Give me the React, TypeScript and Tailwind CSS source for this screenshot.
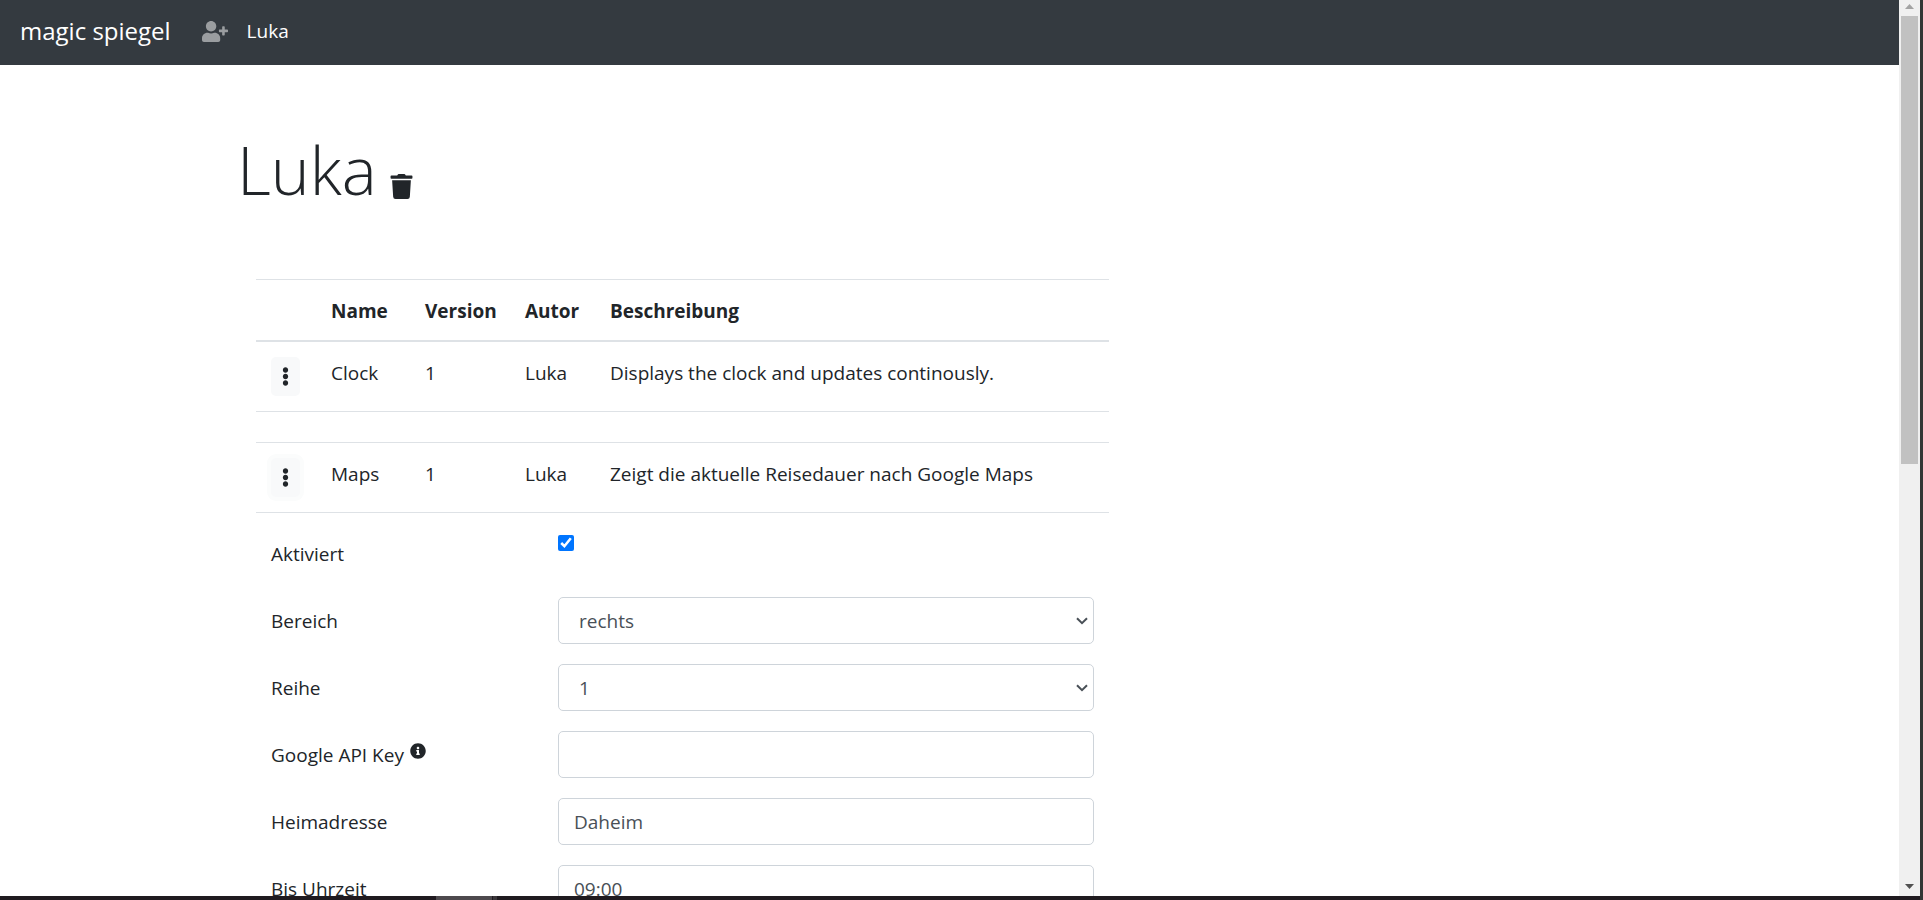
import type { ReactNode } from "react";
import { FaEllipsisV, FaInfoCircle, FaTrash, FaUserPlus } from "react-icons/fa";

const cell = "pt-4 pr-[14px] pb-[14px] pl-4";

function ModuleRow(props: { name: string; version: string; author: string; text: string; focused?: boolean }) {
  return (
    <tr className="border-t border-[#dee2e6] align-top">
      <td className="px-[15px] py-[15px]">
        <button
          type="button"
          aria-label={`Menü ${props.name}`}
          className={
            props.focused
              ? "flex h-[39px] w-[29px] items-center justify-center rounded-[5px] bg-[#f8f9fa] ring-4 ring-[#fbfcfc]"
              : "flex h-[39px] w-[29px] items-center justify-center rounded-[5px] bg-[#f8f9fa]"
          }
        >
          <FaEllipsisV size={19} />
        </button>
      </td>
      <td className={cell}>{props.name}</td>
      <td className={cell}>{props.version}</td>
      <td className={cell}>{props.author}</td>
      <td className={cell}>{props.text}</td>
    </tr>
  );
}

function Field(props: { id: string; label: ReactNode; children: ReactNode }) {
  return (
    <div className="flex">
      <label htmlFor={props.id} className="flex h-[47px] w-[287px] shrink-0 items-center">
        {props.label}
      </label>
      <div className="min-w-0 flex-1">{props.children}</div>
    </div>
  );
}

const control = "block h-[47px] w-full rounded-[5px] border border-[#ced4da] bg-white px-[15px] text-[#495057]";

function Select(props: { id: string; options: string[] }) {
  return (
    <div className="relative">
      <select
        id={props.id}
        className="block h-[47px] w-full appearance-none rounded-[5px] border border-[#ced4da] bg-white px-5 text-[#495057]"
      >
        {props.options.map((o) => (
          <option key={o}>{o}</option>
        ))}
      </select>
      <svg
        viewBox="0 0 12 8"
        className="pointer-events-none absolute top-5 right-1.5 h-2 w-3"
        fill="none"
        stroke="#495057"
        strokeWidth="2"
        aria-hidden="true"
      >
        <path d="M1 1.2 6 6.2 11 1.2" />
      </svg>
    </div>
  );
}

export default function App() {
  return (
    <div className="flex h-screen overflow-hidden bg-white font-['Open_Sans',sans-serif] text-[19px] leading-[30px] text-[#212529]">
      <div className="flex min-w-0 flex-1 flex-col">
        <div className="flex min-h-0 flex-1">
          <div className="min-w-0 flex-1 overflow-hidden">
            <nav className="flex h-[65px] items-center bg-[#343a40] px-5 pb-[3px] text-white">
              <a href="#" className="text-[24px]">magic spiegel</a>
              <a href="#" aria-label="Benutzer hinzufügen" className="ml-[31px] text-white/50">
                <FaUserPlus className="h-[21px] w-[26px]" />
              </a>
              <a href="#" className="ml-[19px]">Luka</a>
            </nav>

            <main className="mx-auto max-w-[1425px] pt-[62px]">
              <div className="flex items-end">
                <h1 className="text-[66px] leading-[84px] font-light">Luka</h1>
                <button type="button" aria-label="Löschen" className="ml-3 pb-3">
                  <FaTrash size={25} />
                </button>
              </div>

              <div className="mt-[68px] w-5/8 px-[19px]">
                <table className="w-full table-fixed border-collapse text-left">
                  <colgroup>
                    <col className="w-[59px]" />
                    <col className="w-[94px]" />
                    <col className="w-[100px]" />
                    <col className="w-[85px]" />
                    <col />
                  </colgroup>
                  <thead>
                    <tr className="border-t border-b-2 border-t-[#dee2e6] border-b-[#dee2e6]">
                      <th className={cell} />
                      <th className={cell}>Name</th>
                      <th className={cell}>Version</th>
                      <th className={cell}>Autor</th>
                      <th className={cell}>Beschreibung</th>
                    </tr>
                  </thead>
                  <tbody>
                    <ModuleRow name="Clock" version="1" author="Luka" text="Displays the clock and updates continously." />
                    <tr className="border-t border-[#dee2e6]">
                      <td colSpan={5} className="p-[15px]" />
                    </tr>
                    <ModuleRow name="Maps" version="1" author="Luka" text="Zeigt die aktuelle Reisedauer nach Google Maps" focused />
                    <tr className="border-t border-[#dee2e6]">
                      <td colSpan={5} className="px-[15px] pt-[17px] pb-[15px]">
                        <form className="flex flex-col gap-5">
                          <Field id="active" label="Aktiviert">
                            <input id="active" type="checkbox" defaultChecked className="mt-[5px] block size-4 accent-[#0075ff]" />
                          </Field>
                          <Field id="area" label="Bereich">
                            <Select id="area" options={["rechts", "links"]} />
                          </Field>
                          <Field id="row" label="Reihe">
                            <Select id="row" options={["1", "2"]} />
                          </Field>
                          <Field
                            id="key"
                            label={
                              <>
                                Google API Key
                                <FaInfoCircle size={16} className="mb-2 ml-1.5" />
                              </>
                            }
                          >
                            <input id="key" type="text" className={control} />
                          </Field>
                          <Field id="home" label="Heimadresse">
                            <input id="home" type="text" defaultValue="Daheim" className={control} />
                          </Field>
                          <Field id="until" label="Bis Uhrzeit">
                            <input id="until" type="text" defaultValue="09:00" className={control} />
                          </Field>
                        </form>
                      </td>
                    </tr>
                  </tbody>
                </table>
              </div>
            </main>
          </div>

          <div className="flex w-[21px] shrink-0 flex-col items-center bg-[#f0f0f0]" aria-hidden="true">
            <svg viewBox="0 0 17 16" className="h-4 w-[17px] shrink-0">
              <path d="M4 9 8.5 4 13 9Z" fill="#a3a3a3" />
            </svg>
            <div className="h-1/2 w-[17px] bg-[#c1c1c1]" />
            <svg viewBox="0 0 17 16" className="mt-auto h-4 w-[17px] shrink-0">
              <path d="M4 4 8.5 9 13 4Z" fill="#505050" />
            </svg>
          </div>
        </div>
        <div className="flex h-1 shrink-0 bg-[#201b20]">
          <div className="ml-[436px] w-14 bg-[#4d494d]" />
          <div className="ml-px w-1 bg-[#3a363a]" />
        </div>
      </div>
      <div className="w-[3px] shrink-0 bg-[#333534]" />
    </div>
  );
}
